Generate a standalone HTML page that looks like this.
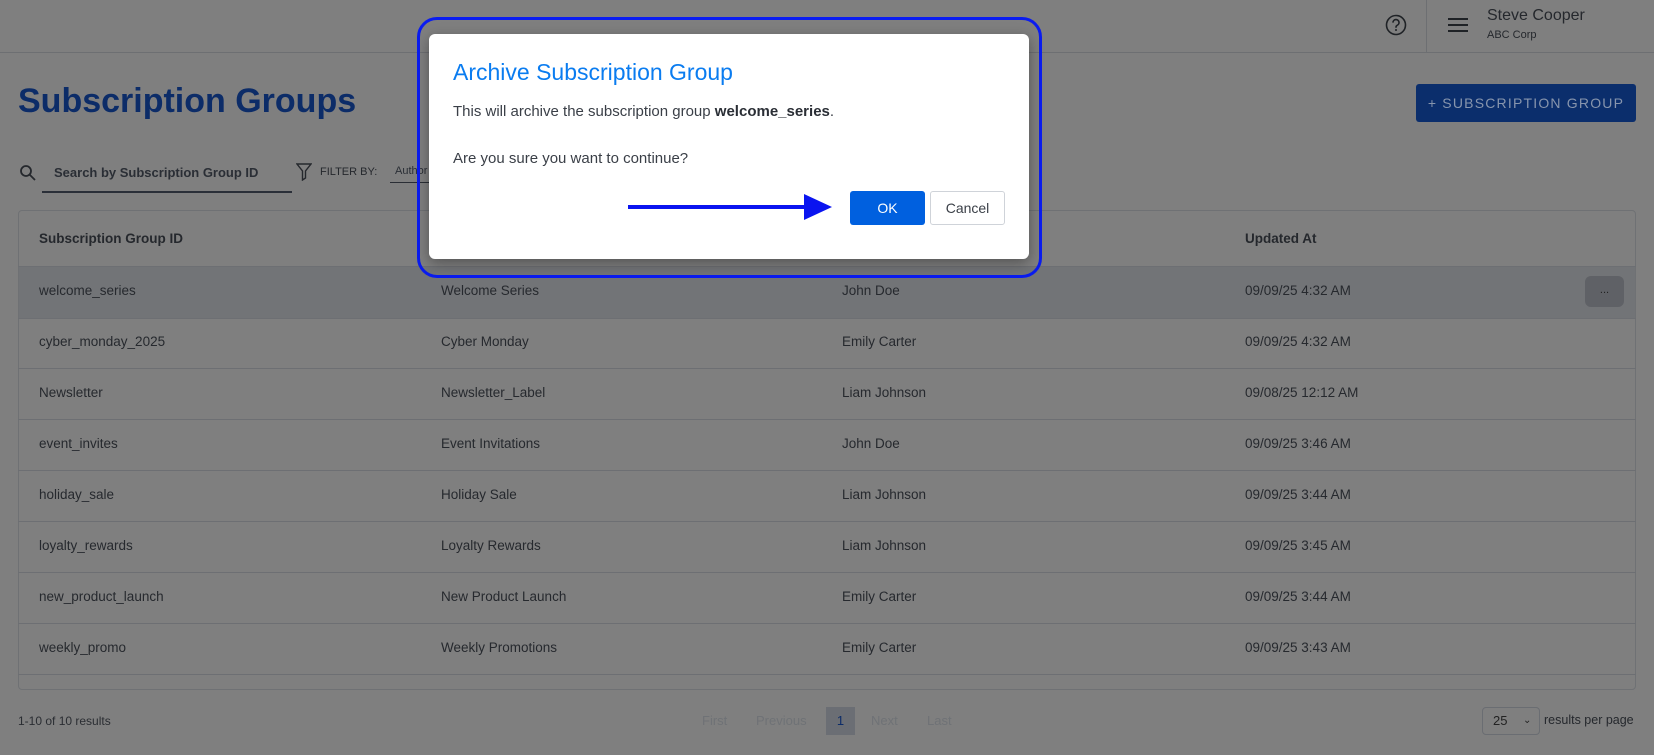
<!DOCTYPE html>
<html style="background:#7f7f7f"><head><meta charset="utf-8"><style>
*{box-sizing:border-box;margin:0;padding:0}
html,body{background:#7f7f7f}
body{width:1654px;height:755px;overflow:hidden;font-family:"Liberation Sans",sans-serif;color:#24272c;position:relative}
.bg{position:absolute;left:0;top:0;width:1654px;height:755px;background:#7f7f7f}
.a{position:absolute;white-space:nowrap}
.hdr{position:absolute;left:0;top:0;width:1654px;height:53px;border-bottom:1px solid #6d6f72}
.tbl{position:absolute;left:18px;top:210px;width:1618px;height:480px;border:1px solid #6f7174;border-radius:4px}
.row{position:absolute;left:18px;width:1618px;height:1px;background:#6d6f73}
.cell{position:absolute;font-size:13.5px;color:#26292e}
</style></head><body>
<div class="bg"></div>
<div class="hdr"></div>
<svg class="a" style="left:1385px;top:14px" width="22" height="22" viewBox="0 0 22 22"><circle cx="11" cy="11" r="9.5" fill="none" stroke="#1f2226" stroke-width="1.6"/><path d="M8 8.6a3 3 0 1 1 4.2 2.7c-.8.4-1.2.9-1.2 1.8v.6" fill="none" stroke="#1f2226" stroke-width="1.6"/><circle cx="11" cy="16" r="1" fill="#1f2226"/></svg>
<div class="a" style="left:1426px;top:0;width:1px;height:53px;background:#6d6f72"></div>
<svg class="a" style="left:1447px;top:16px" width="22" height="18"><path d="M1 3h20M1 9h20M1 15h20" stroke="#1f2226" stroke-width="2"/></svg>
<div class="a" style="left:1487px;top:7px;font-size:16px;color:#25282d">Steve Cooper</div>
<div class="a" style="left:1487px;top:29px;font-size:11px;color:#25282d">ABC Corp</div>

<div class="a" style="left:18px;top:82px;font-size:34px;font-weight:bold;color:#0c2c68">Subscription Groups</div>
<div class="a" style="left:1416px;top:84px;width:220px;height:38px;background:#0b2e6c;border-radius:3px;color:#8795ad;font-size:14px;letter-spacing:1.2px;line-height:38px;text-align:center">+ SUBSCRIPTION GROUP</div>

<svg class="a" style="left:19px;top:164px" width="18" height="18"><circle cx="7" cy="7" r="5" fill="none" stroke="#25282d" stroke-width="1.8"/><path d="M11 11l5 5" stroke="#25282d" stroke-width="1.8"/></svg>
<div class="a" style="left:54px;top:165px;font-size:13px;font-weight:bold;color:#2a2e35">Search by Subscription Group ID</div>
<div class="a" style="left:42px;top:191px;width:250px;height:2px;background:#2a2f38"></div>
<svg class="a" style="left:296px;top:163px" width="16" height="18"><path d="M1 1h14l-5.5 7v7l-3 2v-9z" fill="none" stroke="#25282d" stroke-width="1.4"/></svg>
<div class="a" style="left:320px;top:166px;font-size:11px;color:#25282d">FILTER BY:</div>
<div class="a" style="left:395px;top:165px;font-size:11px;color:#2a2e35">Author</div>
<div class="a" style="left:390px;top:182px;width:40px;height:1px;background:#2a2e35"></div>

<div class="tbl"></div>
<div class="a" style="left:19px;top:267px;width:1616px;height:51px;background:#727477"></div>
<div class="row" style="top:266px"></div>
<div class="row" style="top:318px"></div><div class="row" style="top:368px"></div><div class="row" style="top:419px"></div><div class="row" style="top:470px"></div><div class="row" style="top:521px"></div><div class="row" style="top:572px"></div><div class="row" style="top:623px"></div><div class="row" style="top:674px"></div>
<div class="cell" style="left:39px;top:231px;font-weight:bold;color:#25282d">Subscription Group ID</div>
<div class="cell" style="left:1245px;top:231px;font-weight:bold;color:#25282d">Updated At</div>
<div class="a" style="left:1585px;top:276px;width:39px;height:31px;background:#5f6166;border-radius:6px;text-align:center;font-size:11px;line-height:28px;color:#222">...</div>

<div class="cell" style="left:39px;top:283px">welcome_series</div><div class="cell" style="left:441px;top:283px">Welcome Series</div><div class="cell" style="left:842px;top:283px">John Doe</div><div class="cell" style="left:1245px;top:283px">09/09/25 4:32 AM</div>
<div class="cell" style="left:39px;top:334px">cyber_monday_2025</div><div class="cell" style="left:441px;top:334px">Cyber Monday</div><div class="cell" style="left:842px;top:334px">Emily Carter</div><div class="cell" style="left:1245px;top:334px">09/09/25 4:32 AM</div>
<div class="cell" style="left:39px;top:385px">Newsletter</div><div class="cell" style="left:441px;top:385px">Newsletter_Label</div><div class="cell" style="left:842px;top:385px">Liam Johnson</div><div class="cell" style="left:1245px;top:385px">09/08/25 12:12 AM</div>
<div class="cell" style="left:39px;top:436px">event_invites</div><div class="cell" style="left:441px;top:436px">Event Invitations</div><div class="cell" style="left:842px;top:436px">John Doe</div><div class="cell" style="left:1245px;top:436px">09/09/25 3:46 AM</div>
<div class="cell" style="left:39px;top:487px">holiday_sale</div><div class="cell" style="left:441px;top:487px">Holiday Sale</div><div class="cell" style="left:842px;top:487px">Liam Johnson</div><div class="cell" style="left:1245px;top:487px">09/09/25 3:44 AM</div>
<div class="cell" style="left:39px;top:538px">loyalty_rewards</div><div class="cell" style="left:441px;top:538px">Loyalty Rewards</div><div class="cell" style="left:842px;top:538px">Liam Johnson</div><div class="cell" style="left:1245px;top:538px">09/09/25 3:45 AM</div>
<div class="cell" style="left:39px;top:589px">new_product_launch</div><div class="cell" style="left:441px;top:589px">New Product Launch</div><div class="cell" style="left:842px;top:589px">Emily Carter</div><div class="cell" style="left:1245px;top:589px">09/09/25 3:44 AM</div>
<div class="cell" style="left:39px;top:640px">weekly_promo</div><div class="cell" style="left:441px;top:640px">Weekly Promotions</div><div class="cell" style="left:842px;top:640px">Emily Carter</div><div class="cell" style="left:1245px;top:640px">09/09/25 3:43 AM</div>

<div class="a" style="left:18px;top:714px;font-size:12px;color:#2a2d32">1-10 of 10 results</div>
<div class="a" style="left:702px;top:713px;font-size:13px;color:#6f7276">First</div>
<div class="a" style="left:756px;top:713px;font-size:13px;color:#6f7276">Previous</div>
<div class="a" style="left:826px;top:707px;width:29px;height:28px;background:#6b6e74;color:#0c2c68;font-size:13px;text-align:center;line-height:28px">1</div>
<div class="a" style="left:871px;top:713px;font-size:13px;color:#6f7276">Next</div>
<div class="a" style="left:927px;top:713px;font-size:13px;color:#6f7276">Last</div>
<div class="a" style="left:1482px;top:707px;width:58px;height:28px;border:1px solid #6a6d72;border-radius:4px;font-size:13px;line-height:26px;padding-left:10px;color:#222">25 <span style="position:absolute;left:40px;font-size:10px">&#8964;</span></div>
<div class="a" style="left:1544px;top:713px;font-size:12.5px;color:#25282d">results per page</div>

<div class="a" style="left:417px;top:17px;width:625px;height:261px;border:3px solid #0a1cf0;border-radius:20px"></div>
<div class="a" style="left:429px;top:34px;width:600px;height:225px;background:#fff;border-radius:6px;box-shadow:0 4px 14px rgba(0,0,0,.35)"></div>
<div class="a" style="left:453px;top:59px;font-size:23px;color:#0a7cf0">Archive Subscription Group</div>
<div class="a" style="left:453px;top:103px;font-size:15px;color:#3a3f47">This will archive the subscription group <b style="color:#2a2e35">welcome_series</b>.</div>
<div class="a" style="left:453px;top:150px;font-size:15px;color:#3a3f47">Are you sure you want to continue?</div>
<svg class="a" style="left:628px;top:193px" width="206" height="28"><path d="M0 14h178" stroke="#0a14f0" stroke-width="4"/><path d="M176 1l28 13-28 13z" fill="#0a14f0"/></svg>
<div class="a" style="left:850px;top:191px;width:75px;height:34px;background:#0060df;border-radius:3px;color:#fff;font-size:14px;text-align:center;line-height:34px">OK</div>
<div class="a" style="left:930px;top:191px;width:75px;height:34px;border:1px solid #cfd3d9;border-radius:3px;color:#3a3f47;font-size:14px;text-align:center;line-height:32px">Cancel</div>
</body></html>
